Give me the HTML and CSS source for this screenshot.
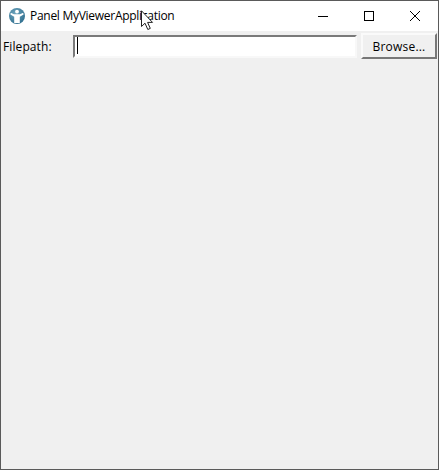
FILE: index.html
```html
<!DOCTYPE html>
<html lang="en">
<head>
<meta charset="utf-8">
<title>Panel MyViewerApplication</title>
<link rel="stylesheet" href="styles.css">
</head>
<body>
<div class="window">
  <header class="titlebar">
    <svg class="app-icon" width="16" height="16" viewBox="0 0 16 16">
      <defs>
        <radialGradient id="ball" cx="0.4" cy="0.35" r="0.75">
          <stop offset="0" stop-color="#6fa6bf"/>
          <stop offset="1" stop-color="#2a6a8a"/>
        </radialGradient>
      </defs>
      <circle cx="8" cy="8" r="8" fill="url(#ball)"/>
      <circle cx="8" cy="3.6" r="1.9" fill="#fff"/>
      <path d="M1.8 4.8 L5 6.2 H11 L14.2 4.8 L14.6 6.6 L10.8 8.8 V15 H5.2 V8.8 L1.4 6.6 Z" fill="#fff"/>
    </svg>
    <span class="title">Panel MyViewerApplication</span>
    <div class="controls">
      <button class="ctl" aria-label="Minimize"><svg width="10" height="10" viewBox="0 0 10 10"><path d="M0 5.5H10" stroke="#000" fill="none"/></svg></button>
      <button class="ctl" aria-label="Maximize"><svg width="10" height="10" viewBox="0 0 10 10"><rect x=".5" y=".5" width="9" height="9" stroke="#000" fill="none"/></svg></button>
      <button class="ctl" aria-label="Close"><svg width="10" height="10" viewBox="0 0 10 10"><path d="M0 0L10 10M10 0L0 10" stroke="#000" fill="none"/></svg></button>
    </div>
  </header>
  <main class="panel">
    <div class="row">
      <label class="label">Filepath:</label>
      <div class="input"><span class="caret"></span></div>
      <button class="browse">Browse...</button>
    </div>
  </main>
  <svg class="cursor" width="14" height="21" viewBox="0 0 14 21">
    <path d="M1.5 .8V16.5L5 13.2L7.8 19.5L10.3 18.4L7.6 12.4H12.5Z" fill="#fff" stroke="#222" stroke-width="1"/>
  </svg>
</div>
</body>
</html>
```
FILE: styles.css
```css
* { box-sizing: border-box; }
html, body { margin: 0; padding: 0; }
.window {
  position: relative;
  width: 439px;
  height: 470px;
  border: 1px solid #5a5a5a;
  background: #f0f0f0;
  display: flex;
  flex-direction: column;
  font-family: "Open Sans", "Noto Sans", sans-serif;
  font-size: 12px;
  color: #000;
  overflow: hidden;
}
.titlebar {
  height: 30px;
  background: #fff;
  display: flex;
  align-items: center;
  padding-left: 8px;
  flex: none;
}
.app-icon { flex: none; }
.title { margin-left: 5px; margin-bottom: 2px; white-space: nowrap; letter-spacing: -0.28px; }
.controls { margin-left: auto; display: flex; height: 100%; }
.ctl {
  width: 46px;
  height: 100%;
  border: 0;
  padding: 0;
  background: transparent;
  display: flex;
  align-items: center;
  justify-content: center;
}
.panel { flex: 1; padding: 2px 1px 0 2px; }
.row { display: flex; align-items: flex-start; }
.label { width: 70px; line-height: 28px; flex: none; letter-spacing: 0.1px; }
.input {
  width: 284px;
  height: 23px;
  margin-top: 2px;
  flex: none;
  background: #fff;
  border: 2px solid;
  border-color: #7a7a7a #f8f8f8 #f8f8f8 #7a7a7a;
  padding: 0 0 0 2px;
}
.caret { display: block; width: 1px; height: 17px; background: #000; }
.browse {
  width: 76px;
  height: 26px;
  margin-left: 4px;
  flex: none;
  padding: 0;
  font: inherit;
  letter-spacing: 0.2px;
  color: #000;
  background: #f0f0f0;
  border: 2px solid;
  border-color: #fafafa #777 #777 #fafafa;
}
.cursor { position: absolute; left: 139px; top: 9px; }
```
